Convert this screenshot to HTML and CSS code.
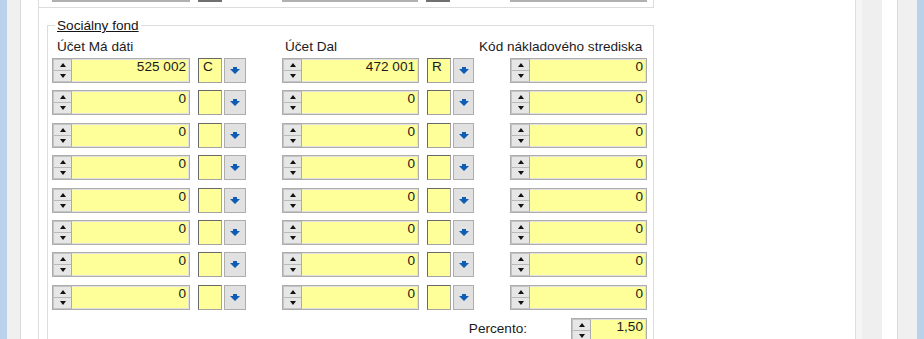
FILE: index.html
```html
<!DOCTYPE html>
<html lang="sk">
<head>
  <meta charset="UTF-8" />
  <title>Sociálny fond</title>
  <link rel="stylesheet" href="styles.css">
</head>
<body>
  <div class="edge"></div>
  <div class="rail"></div>

  <div class="panel">
    <div class="form">

      <!-- tail of the box above -->
      <div class="topbox">
        <div class="row stubs">
          <div class="acct"><span class="stub"></span><span class="stub dark"></span><span class="stub none"></span></div>
          <div class="acct"><span class="stub"></span><span class="stub dark"></span><span class="stub none"></span></div>
          <span class="stub"></span>
        </div>
      </div>

      <fieldset class="group">
        <legend>Sociálny fond</legend>

        <div class="row labels">
          <span class="lbl first">Účet Má dáti</span>
          <span class="lbl">Účet Dal</span>
          <span class="lbl last">Kód nákladového strediska</span>
        </div>

        <div class="rows" id="rows"></div>

        <div class="percent">
          <span class="plabel">Percento:</span>
          <div class="spin small">
            <div class="arrows"><span class="up"></span><span class="down"></span></div>
            <div class="val">1,50</div>
          </div>
        </div>
      </fieldset>

    </div>
  </div>

  <div class="side-a"></div>
  <div class="side-b"></div>
  <div class="side-c"></div>
  <div class="side-d"></div>
  <div class="edge"></div>

  <script>
    const data = [
      ["525 002", "C", "472 001", "R", "0"],
      ["0", "", "0", "", "0"],
      ["0", "", "0", "", "0"],
      ["0", "", "0", "", "0"],
      ["0", "", "0", "", "0"],
      ["0", "", "0", "", "0"],
      ["0", "", "0", "", "0"],
      ["0", "", "0", "", "0"]
    ];

    function spin(value) {
      return '<div class="spin"><div class="arrows"><span class="up"></span><span class="down"></span></div>' +
             '<div class="val">' + value + '</div></div>';
    }

    function account(value, side) {
      return '<div class="acct">' + spin(value) +
             '<div class="sidebox">' + side + '</div>' +
             '<button class="drop"><svg width="10" height="7" viewBox="0 0 10 7"><polygon points="3,0 7,0 7,2 10,2 5,7 0,2 3,2" fill="#0f5cb5"/></svg></button>' +
             '</div>';
    }

    const rows = document.getElementById("rows");
    data.forEach(function (r) {
      const row = document.createElement("div");
      row.className = "row";
      row.innerHTML = account(r[0], r[1]) + account(r[2], r[3]) + spin(r[4]);
      rows.appendChild(row);
    });
  </script>
</body>
</html>
```

FILE: styles.css
```css
* {
  box-sizing: border-box;
}
body {
  margin: 0;
  height: 339px;
  overflow: hidden;
  display: flex;
  background: #fff;
  font-family: "Liberation Sans", Arial, sans-serif;
  font-size: 13.6px;
  color: #1b1b1b;
}
.edge {
  width: 7px;
  flex-shrink: 0;
  background: #b9d1ea;
}
.rail {
  width: 14px;
  background: #f0f0f0;
  border-right: 1px solid #d9d9d9;
}
.panel {
  width: 835px;
  padding-left: 17px;
  border-right: 1px solid #dedede;
}
.side-a { width: 6px; background: #f5f5f5; }
.side-b { width: 20px; background: #efefef; }
.side-c { width: 16px; background: #fff; border-right: 1px solid #dadada; }
.side-d { width: 19px; background: #f0f0f0; }

.form {
  width: 616px;
  height: 100%;
  border-left: 1px solid #dcdcdc;
}
.topbox {
  height: 8px;
  padding-left: 13px;
  border-right: 1px solid #dcdcdc;
  border-bottom: 1px solid #dcdcdc;
}
.stubs {
  height: 2px !important;
}
.stub {
  height: 2px;
  background: #b0b0b0;
}
.acct .stub { flex: 1; }
.acct .stub.dark { flex: none; width: 24px; margin-left: 8px; background: #707070; }
.acct .stub.none { flex: none; width: 22px; margin-left: 2px; background: transparent; }

.group {
  margin: 10px 0 0 8px;
  padding: 6px 0 0 4px;
  border: 1px solid #dcdcdc;
  min-width: 0;
}
.group legend {
  margin-left: 3px;
  padding: 0 2px;
  line-height: 15px;
  text-decoration: underline;
  color: #141414;
}

.row {
  display: grid;
  grid-template-columns: 194px 192px 137px;
  column-gap: 36px;
  height: 25px;
}
.labels {
  height: 15px;
  line-height: 15px;
  margin-bottom: 4px;
}
.lbl.first { padding-left: 5px; }
.lbl { padding-left: 3px; white-space: nowrap; }
.lbl.last { padding-left: 0; margin-left: -31px; }

.rows {
  display: flex;
  flex-direction: column;
  gap: 7.4px;
}
.acct {
  display: flex;
}
.acct .spin {
  flex: 1;
}

.spin {
  height: 25px;
  display: flex;
  background: #ffff99;
  border: 1px solid #acacac;
  box-shadow: inset 0 0 0 1px #e2e2e2;
}
.arrows {
  width: 19px;
  display: flex;
  flex-direction: column;
  border: 1px solid #c4c4c4;
  border-right-color: #acacac;
  background: #e6e6e6;
}
.arrows span {
  flex: 1;
  display: flex;
  align-items: center;
  justify-content: center;
}
.arrows .up {
  border-bottom: 1px solid #b9b9b9;
}
.arrows .up::after {
  content: "";
  border-left: 3.5px solid transparent;
  border-right: 3.5px solid transparent;
  border-bottom: 4px solid #111;
}
.arrows .down::after {
  content: "";
  border-left: 3.5px solid transparent;
  border-right: 3.5px solid transparent;
  border-top: 4px solid #111;
}
.val {
  flex: 1;
  text-align: right;
  padding: 1px 3px 0 0;
  line-height: 13px;
}

.sidebox {
  width: 24px;
  height: 25px;
  margin-left: 8px;
  padding: 1px 0 0 4px;
  line-height: 13px;
  background: #ffff99;
  border: 1px solid;
  border-color: #686868 #a3a3a3 #a3a3a3 #686868;
}
.drop {
  width: 22px;
  height: 25px;
  margin-left: 2px;
  padding: 0;
  display: flex;
  align-items: center;
  justify-content: center;
  background: #e1e1e1;
  border: 1px solid #adadad;
}
.acct:nth-child(2) .drop {
  width: 21px;
}

.percent {
  width: 595px;
  margin-top: 8px;
  display: flex;
  justify-content: flex-end;
}
.plabel {
  padding-top: 3px;
  margin-right: 44px;
  line-height: 15px;
}
.spin.small {
  width: 76px;
}
```
